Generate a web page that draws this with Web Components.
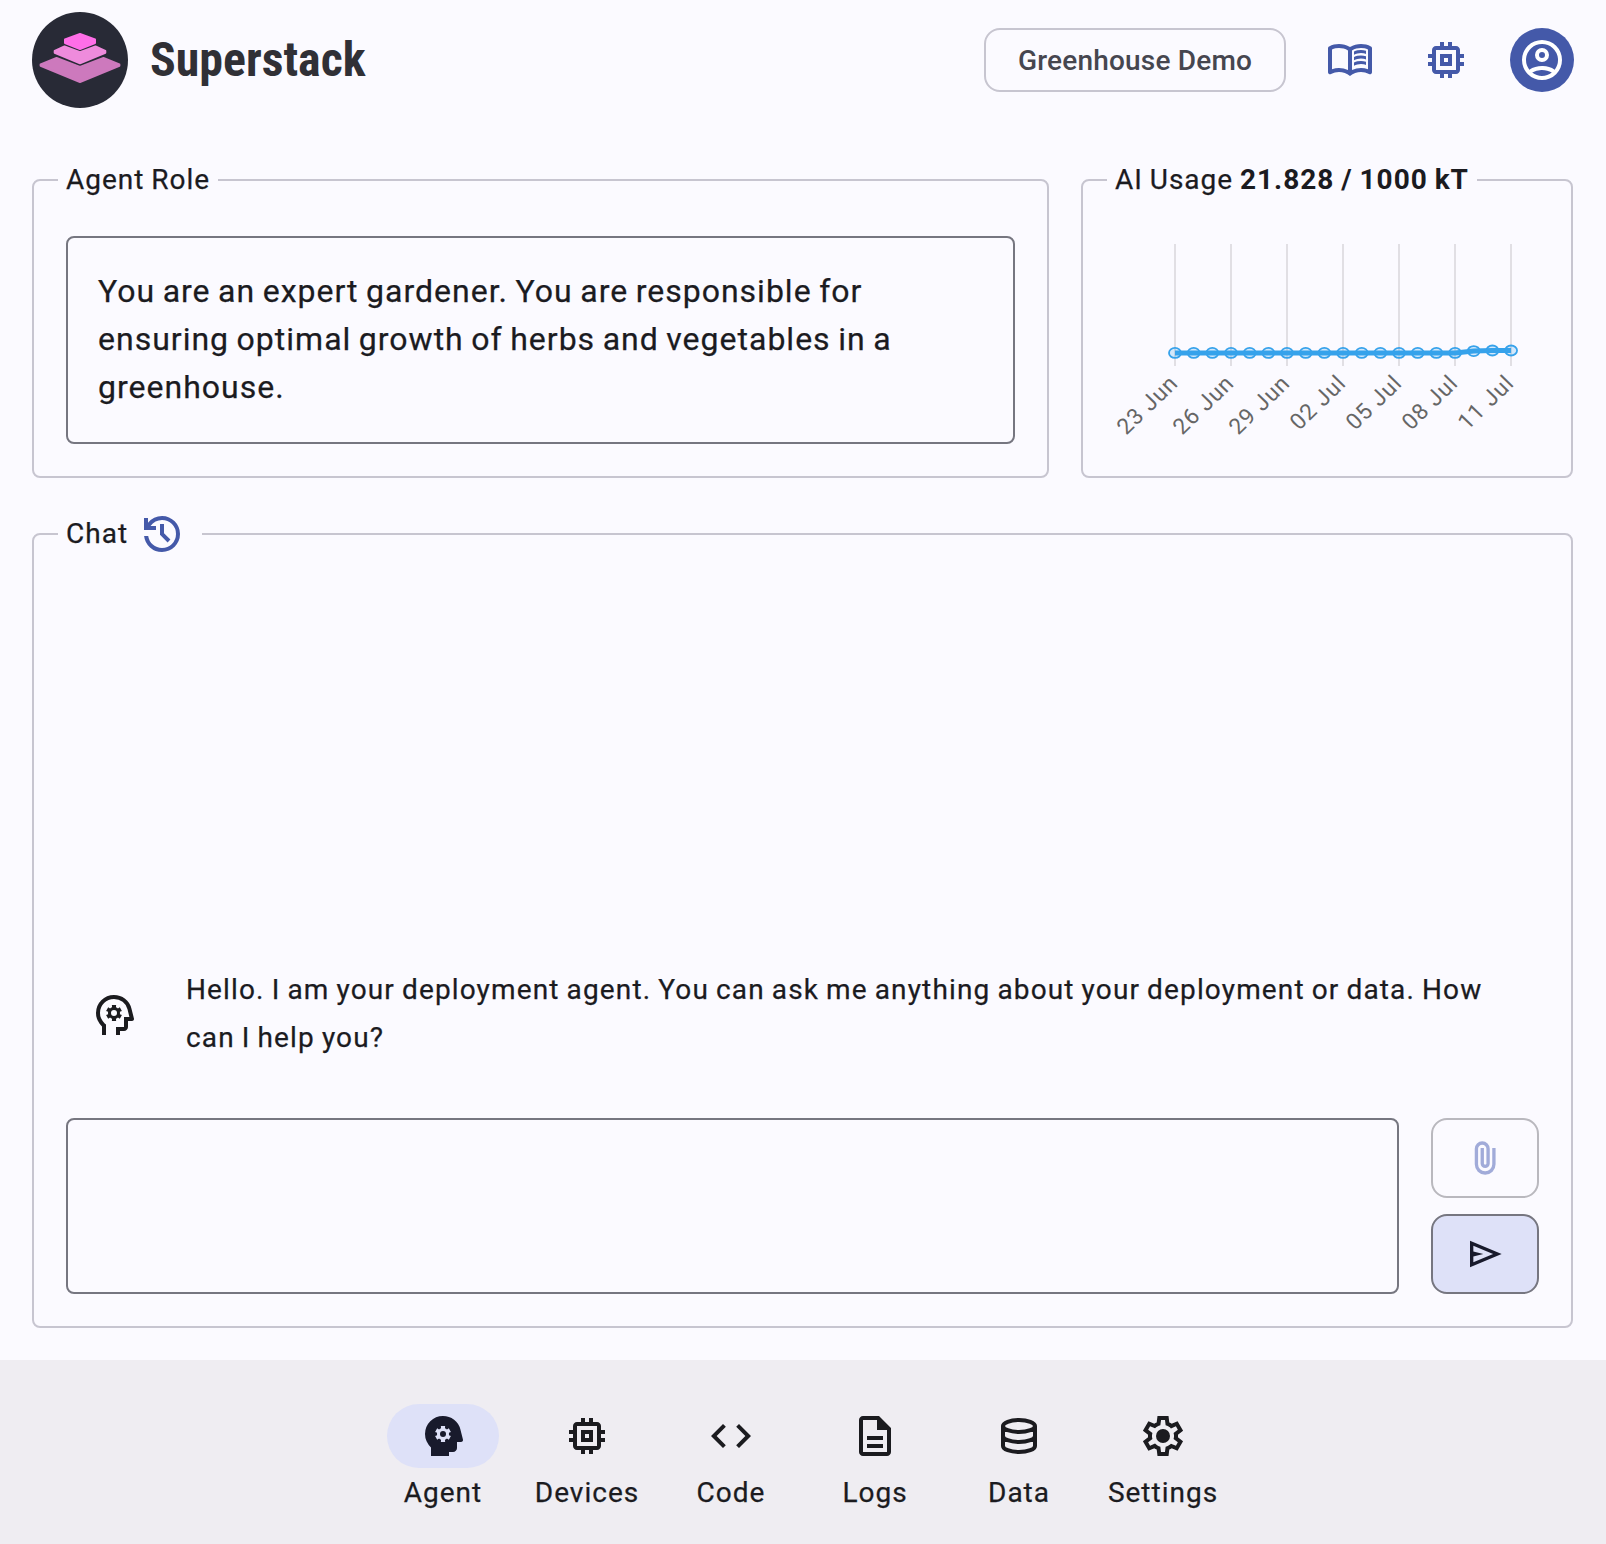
<!DOCTYPE html>
<html lang="en">
<head>
<meta charset="utf-8">
<title>Superstack</title>
<style>
  html, body { margin: 0; height: 100%; }
  body { background: #fbfaff; color: #1b1b1f; font-family: Roboto, "Liberation Sans", sans-serif; -webkit-text-stroke: .25px currentColor; overflow: hidden; }
</style>
</head>
<body>
<stack-app></stack-app>
<script>
const BOOK_LINE = 'V7.700q.825-.350 1.6875-.525T17.500 7q.650 0 1.275.100T20 7.350v1.600q-.600-.225-1.2125-.3375T17.500 8.500q-.950 0-1.825.2375T14 9.400Z';
const ICONS = {
  book: '<path fill-rule="evenodd" d="M6.500 16q1.175 0 2.2875.2625T11 17.050V7.200q-1.025-.600-2.175-.900T6.500 6q-.900 0-1.7875.175T3 6.700v9.900q.875-.300 1.7375-.450T6.500 16zm6.500 1.050q1.100-.525 2.2125-.7875T17.500 16q.900 0 1.7625.150T21 16.600V6.700q-.825-.350-1.7125-.525T17.500 6q-1.175 0-2.325.300T13 7.200v9.850zM12 20q-1.200-.950-2.600-1.475T6.500 18q-1.050 0-2.0625.275T2.500 19.050q-.525.275-1.0125-.025T1 18.150V6.100q0-.275.1375-.525T1.550 5.200q1.150-.600 2.400-.900T6.500 4q1.450 0 2.8375.375T12 5.500q1.275-.750 2.6625-1.125T17.500 4q1.300 0 2.550.300t2.400.900q.275.125.4125.375T23 6.100v12.050q0 .575-.4875.875t-1.0125.025q-.925-.500-1.9375-.775T17.500 18q-1.500 0-2.900.525T12 20z"/>' +
    [0, 2.75, 5.5].map(y => `<path transform="translate(0 ${y})" d="M14 9.400${BOOK_LINE}"/>`).join(''),
  memory: '<path fill-rule="evenodd" d="M15 9H9v6h6V9zm-2 4h-2v-2h2v2zm8-2V9h-2V7c0-1.1-.9-2-2-2h-2V3h-2v2h-2V3H9v2H7c-1.1 0-2 .9-2 2v2H3v2h2v2H3v2h2v2c0 1.1.9 2 2 2h2v2h2v-2h2v2h2v-2h2c1.1 0 2-.9 2-2v-2h2v-2h-2v-2h2zm-4 6H7V7h10v10z"/>',
  account: '<path fill-rule="evenodd" d="M12 2a10 10 0 1 0 0 20 10 10 0 0 0 0-20zm0 18a8 8 0 0 1-4.9-1.7A8.7 8.7 0 0 1 12 17c1.800 0 3.500.5 4.900 1.300A8 8 0 0 1 12 20zm6.360-3.150A10.500 10.500 0 0 0 12 15c-2.300 0-4.500.600-6.350 1.850A8 8 0 1 1 18.360 16.850zM12 6a3.500 3.500 0 1 0 0 7 3.500 3.500 0 0 0 0-7zm0 5a1.500 1.500 0 1 1 0-3 1.500 1.500 0 0 1 0 3z"/>',
  history: '<path d="M12 21q-3.45 0-6.0125-2.2875T3.05 13H5.1q.35 2.6 2.3125 4.3T12 19q2.925 0 4.9625-2.0375T19 12q0-2.925-2.0375-4.9625T12 5q-1.725 0-3.225.8T6.25 8H9v2H3V4h2v2.350q1.275-1.600 3.1125-2.475T12 3q1.875 0 3.5125.7125t2.850 1.925q1.2125 1.2125 1.925 2.850T21 12q0 1.875-.7125 3.5125t-1.925 2.850q-1.2125 1.2125-2.850 1.925T12 21zm2.800-4.800L11 12.400V7h2v4.600l3.200 3.200-1.400 1.400z"/>',
  head: '<path d="M6 22v-4.300q-1.425-1.300-2.2125-3.0375T3 11q0-3.750 2.625-6.375T12 2q3.125 0 5.5375 1.8375T20.675 8.625L21.975 13.750q.125.475-.175.8625T21 15H19v3q0 .825-.5875 1.4125T17 20H15v2H13V18h4V13h2.700l-.95-3.875q-.575-2.275-2.450-3.700T12 4Q9.100 4 7.050 6.025T5 10.950q0 1.500.6125 2.850T7.350 16.200L8 16.800V22Z"/><use href="#gear"/>',
  headFill: '<path fill-rule="evenodd" d="M6 22v-4.300q-1.425-1.300-2.2125-3.0375T3 11q0-3.750 2.625-6.375T12 2q3.125 0 5.5375 1.8375T20.675 8.625L21.975 13.750q.125.475-.175.8625T21 15H19v3q0 .825-.5875 1.4125T17 20H15v2Z"/>',
  code: '<path d="M8 18 2 12 8 6l1.425 1.425-4.600 4.600L9.400 16.600 8 18zm8 0-1.425-1.425 4.600-4.600L14.600 7.400 16 6l6 6-6 6z"/>',
  logs: '<path fill-rule="evenodd" d="M8 18h8v-2H8v2zm0-4h8v-2H8v2zM6 22q-.825 0-1.4125-.5875T4 20V4q0-.825.5875-1.4125T6 2h8l6 6v12q0 .825-.5875 1.4125T18 22H6zM13 9V4H6v16h12V9h-5z"/><path d="M13 3.500V9h6z"/>',
  data: '<path fill="none" stroke="currentColor" stroke-width="2" d="M4 7c0-1.650 3.580-3 8-3s8 1.350 8 3-3.580 3-8 3-8-1.350-8-3zM4 7v10c0 1.650 3.580 3 8 3s8-1.350 8-3V7M4 12c0 1.650 3.580 3 8 3s8-1.350 8-3"/>',
  settings: '<path fill-rule="evenodd" d="m9.250 22-.4-3.200q-.325-.125-.6125-.300T7.675 18.125L4.700 19.375 1.950 14.625 4.525 12.675q-.025-.175-.025-.3375V11.6625q0-.1625.025-.3375L1.950 9.375 4.700 4.625 7.675 5.875q.275-.200.575-.375t.600-.300L9.250 2h5.500l.4 3.200q.325.125.6125.300t.5625.375L19.300 4.625l2.750 4.750-2.575 1.950q.025.175.025.3375v.675q0 .1625-.05.3375l2.575 1.950-2.750 4.750-2.950-1.250q-.275.200-.575.375t-.600.300l-.4 3.200H9.250zM11 20h1.975l.350-2.650q.775-.200 1.4375-.5875T15.975 15.825l2.475 1.025.975-1.700-2.150-1.625q.125-.350.175-.7375T17.500 12t-.05-.7875-.175-.7375L19.425 8.850l-.975-1.700-2.475 1.050q-.550-.575-1.2125-.9625T13.325 6.650L13 4h-1.975l-.350 2.650q-.775.200-1.4375.5875T8.025 8.175L5.550 7.150l-.975 1.700 2.150 1.600q-.125.375-.175.750T6.500 12q0 .400.050.775t.175.750L4.575 15.150l.975 1.700 2.475-1.050q.550.575 1.2125.9625t1.4375.5875L11 20z"/><circle cx="12" cy="12" r="3.500"/>',
  clip: '<path transform="translate(.35 0)" d="M18 15.750q0 2.600-1.825 4.425T11.750 22q-2.600 0-4.425-1.825T5.500 15.750V6.500q0-1.875 1.3125-3.1875T10 2q1.875 0 3.1875 1.3125T14.500 6.500v8.750q0 1.150-.800 1.950T11.750 18q-1.150 0-1.950-.800T9 15.250V6h2v9.250q0 .325.2125.5375T11.750 16q.325 0 .5375-.2125T12.500 15.250V6.500q-.025-1.050-.7375-1.775T10 4q-1.050 0-1.775.725T7.500 6.500v9.250q-.025 1.775 1.225 3.0125T11.750 20q1.750 0 2.975-1.2375T16 15.750V6h2v9.750z"/>',
  send: '<path fill-rule="evenodd" d="M3 20V4l19 8L3 20zm2-3 11.850-5L5 7v3.500l6 1.500-6 1.500V17z"/>'
};

// Small six-toothed cog centred on the head icons.
function cog(cx, cy, outer, inner) {
  const pts = [];
  for (let i = 0; i < 6; i++) {
    const a = i * 60 - 90;
    for (const [da, r] of [[-30, inner], [-19, inner], [-15, outer], [15, outer], [19, inner]]) {
      const t = (a + da) * Math.PI / 180;
      pts.push((cx + r * Math.cos(t)).toFixed(2) + ' ' + (cy + r * Math.sin(t)).toFixed(2));
    }
  }
  return 'M' + pts.join('L') + 'Z';
}
const HOLE = 'M12 9.500a1.500 1.500 0 1 0 0 3 1.500 1.500 0 0 0 0-3z';
ICONS.head = ICONS.head.replace('<use href="#gear"/>', `<path fill-rule="evenodd" d="${cog(12, 11, 4.1, 3)}${HOLE}"/>`);
ICONS.headFill = ICONS.headFill.replace('Z"/>', 'Z' + cog(12, 11, 4.1, 3) + '"/><circle cx="12" cy="11" r="1.500"/>');

class StackIcon extends HTMLElement {
  connectedCallback() {
    this.attachShadow({ mode: 'open' }).innerHTML = `
      <style>:host{display:block;flex:none;width:48px;height:48px;white-space:normal}svg{display:block;width:100%;height:100%}</style>
      <svg viewBox="0 0 24 24" fill="currentColor" aria-hidden="true">${ICONS[this.getAttribute('name')]}</svg>`;
  }
}
customElements.define('stack-icon', StackIcon);

class StackBrand extends HTMLElement {
  connectedCallback() {
    this.attachShadow({ mode: 'open' }).innerHTML = `
      <style>
        :host{display:flex;align-items:center;gap:22px;color:#303036}
        svg{display:block;flex:none}
        text{font:700 48px "Roboto Condensed",Roboto,sans-serif;fill:currentColor}
      </style>
      <svg width="96" height="96" viewBox="0 0 96 96">
        <circle cx="48" cy="48" r="48" fill="#282a36"/>
        <g stroke-linejoin="round" stroke-width="2">
          <path d="M48 70 8.600 53.800 8.600 52.500 24.500 46 48 55 71.500 46 87.400 52.500 87.400 53.800z" fill="#cd79bd" stroke="#cd79bd"/>
          <path d="M48 51.300 22.700 40.800 22.700 39 32.500 34.500 48 40.300 63.500 34.500 73.300 39 73.300 40.800z" fill="#ee8bdc" stroke="#ee8bdc"/>
          <path d="M48 37 33 31 33 27.500 48 22 63 27.500 63 31z" fill="#ff6ee8" stroke="#ff6ee8"/>
        </g>
      </svg>
      <svg width="220" height="72"><text x="0" y="52" textLength="215.500" lengthAdjust="spacingAndGlyphs">Superstack</text></svg>`;
  }
}
customElements.define('stack-brand', StackBrand);

// Outlined card whose title interrupts the top border.
class StackPanel extends HTMLElement {
  connectedCallback() {
    this.attachShadow({ mode: 'open' }).innerHTML = `
      <style>
        :host{--h:var(--legend-height,40px);display:flex;min-width:0;box-sizing:border-box;padding-top:calc(var(--h) / 2 - 1px)}
        .frame{flex:1;min-width:0;border:2px solid #c7c5d0;border-radius:8px;padding:0 32px 32px;box-sizing:border-box;display:flex;flex-direction:column}
        .title{align-self:flex-start;display:flex;align-items:center;white-space:pre;height:var(--h);flex:none;margin:calc(var(--h) / -2 - 1px) 0 0 -8px;padding:0 8px;background:#fbfaff;font-size:28px;line-height:40px;letter-spacing:1px;word-spacing:-1.100px}
        .body{display:flex;flex-direction:column;flex:1;min-height:0;padding-top:36px}
      </style>
      <div class="frame"><div class="title"><slot name="title"></slot></div><div class="body"><slot></slot></div></div>`;
  }
}
customElements.define('stack-panel', StackPanel);

class UsageChart extends HTMLElement {
  connectedCallback() {
    const labels = ['23 Jun', '26 Jun', '29 Jun', '02 Jul', '05 Jul', '08 Jul', '11 Jul'];
    const xs = Array.from({ length: 19 }, (_, i) => 60 + i * 18.67);
    const ys = xs.map((_, i) => i < 16 ? 116.9 : i === 16 ? 115.1 : 114.5);
    this.attachShadow({ mode: 'open' }).innerHTML = `
      <style>:host{display:block}svg{display:block;overflow:visible}text{font:24px Roboto,sans-serif;letter-spacing:1px;fill:#666;text-anchor:end;-webkit-text-stroke:.2px #666}</style>
      <svg width="423" height="200">
        ${labels.map((l, i) => `<path d="M${60 + i * 56} 8v122" stroke="#e1dfe4" stroke-width="2"/>
        <text transform="translate(${56.3 + i * 56} 140.500) scale(.955 .925) rotate(-45)" x="0" y="12">${l}</text>`).join('')}
        ${xs.map((x, i) => `<ellipse cx="${x}" cy="${ys[i]}" rx="6" ry="5" fill="#36a2eb" fill-opacity=".2" stroke="#36a2eb" stroke-width="1.800"/>`).join('')}
        <polyline points="${xs.map((x, i) => x + ',' + ys[i]).join(' ')}" fill="none" stroke="#36a2eb" stroke-width="5"/>
      </svg>`;
  }
}
customElements.define('usage-chart', UsageChart);

class NavItem extends HTMLElement {
  connectedCallback() {
    this.attachShadow({ mode: 'open' }).innerHTML = `
      <style>
        :host{display:flex;flex-direction:column;align-items:center;width:144px;gap:5px;font-size:28px;line-height:40px;letter-spacing:1px}
        .pill{display:flex;align-items:center;justify-content:center;width:112px;height:64px;border-radius:32px}
        :host([active]) .pill{background:#dee1f8;color:#181a2c}
      </style>
      <div class="pill"><stack-icon name="${this.getAttribute('icon')}"></stack-icon></div><span><slot></slot></span>`;
  }
}
customElements.define('nav-item', NavItem);

class StackApp extends HTMLElement {
  connectedCallback() {
    this.attachShadow({ mode: 'open' }).innerHTML = `
      <style>
        :host{display:flex;flex-direction:column;height:1544px}
        *{box-sizing:border-box}
        header{display:flex;align-items:center;justify-content:space-between;height:120px;padding:0 32px;flex:none}
        .tools{display:flex;align-items:center;gap:32px;color:#4459a9}
        .deployment{width:302px;height:64px;border:2px solid #c7c5d0;border-radius:16px;background:none;font:500 28px Roboto,sans-serif;letter-spacing:.2px;color:#46464f;padding:0;white-space:nowrap;-webkit-text-stroke:0}
        .tool{display:flex;align-items:center;justify-content:center;width:64px;height:64px;border-radius:50%}
        .tool.user{background:#4459a9;color:#fff}
        main{flex:1;display:flex;flex-direction:column;padding:40px 33px 32px 32px;gap:32px;min-height:0}
        .top{display:flex;gap:32px;height:318px;flex:none}
        .role{flex:1}
        .usage{width:492px}
        .chat{flex:1;--legend-height:48px}
        .box{border:2px solid #767680;border-radius:8px}
        .role .box{height:208px;padding:29px 30px;font-size:32px;line-height:48px;letter-spacing:1px;word-spacing:-1.400px}
        .spacer{flex:1}
        .message{display:flex;align-items:center;gap:48px;padding:0 40px 0 24px;margin-bottom:56px;font-size:28px;line-height:48px;letter-spacing:1.140px;word-spacing:-1.080px}
        .message p{margin:0}
        .message stack-icon{margin-top:2px}
        .chat .name{margin-right:10px}
        .history{color:#4459a9;margin-right:8px}
        .composer{display:flex;gap:32px;height:176px;flex:none}
        .composer .box{flex:1}
        .actions{display:flex;flex-direction:column;gap:16px;width:108px}
        .action{flex:1;border:2px solid #767680;border-radius:16px;display:flex;align-items:center;justify-content:center}
        .attach{border-color:#b9b8be;color:#a1abd9}
        .attach stack-icon,.send stack-icon{width:40px;height:40px}
        .send{background:#dee1f8;color:#181a2c}
        nav{display:flex;justify-content:center;height:184px;flex:none;background:#efedf2;padding-top:44px}
        b{font-weight:700;-webkit-text-stroke:0}
      </style>
      <header>
        <stack-brand></stack-brand>
        <div class="tools">
          <button class="deployment">Greenhouse Demo</button>
          <div class="tool"><stack-icon name="book"></stack-icon></div>
          <div class="tool"><stack-icon name="memory"></stack-icon></div>
          <div class="tool user"><stack-icon name="account"></stack-icon></div>
        </div>
      </header>
      <main>
        <div class="top">
          <stack-panel class="role"><span slot="title">Agent Role</span>
            <div class="box">You are an expert gardener. You are responsible for ensuring optimal growth of herbs and vegetables in a greenhouse.</div>
          </stack-panel>
          <stack-panel class="usage"><span slot="title">AI Usage <b>21.828 / 1000 kT</b></span><usage-chart></usage-chart></stack-panel>
        </div>
        <stack-panel class="chat">
          <span slot="title" class="name">Chat</span><stack-icon slot="title" class="history" name="history"></stack-icon>
          <div class="spacer"></div>
          <div class="message"><stack-icon name="head"></stack-icon><p>Hello. I am your deployment agent. You can ask me anything about your deployment or data. How can I help you?</p></div>
          <div class="composer">
            <div class="box"></div>
            <div class="actions">
              <div class="action attach"><stack-icon name="clip"></stack-icon></div>
              <div class="action send"><stack-icon name="send"></stack-icon></div>
            </div>
          </div>
        </stack-panel>
      </main>
      <nav>
        <nav-item icon="headFill" active>Agent</nav-item>
        <nav-item icon="memory">Devices</nav-item>
        <nav-item icon="code">Code</nav-item>
        <nav-item icon="logs">Logs</nav-item>
        <nav-item icon="data">Data</nav-item>
        <nav-item icon="settings">Settings</nav-item>
      </nav>`;
  }
}
customElements.define('stack-app', StackApp);
</script>
</body>
</html>
